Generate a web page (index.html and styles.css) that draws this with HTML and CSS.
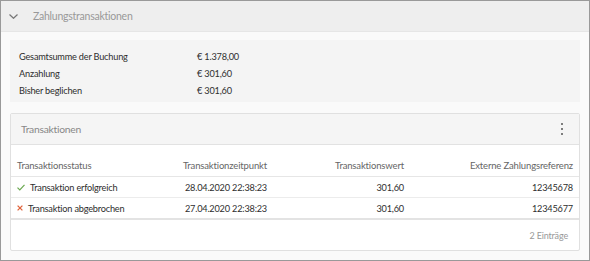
FILE: index.html
```html
<!DOCTYPE html>
<html lang="de">

<head>
    <meta charset="UTF-8">
    <title>Zahlungstransaktionen</title>
    <link rel="stylesheet" href="styles.css">
</head>

<body>
    <div class="panel">
        <div class="panel-header">
            <svg class="chevron" width="9" height="5" viewBox="0 0 9 5">
                <path d="M0.5 0.5 L4.5 4.3 L8.5 0.5" fill="none" stroke="#777" stroke-width="1.2"/>
            </svg>
            <span class="panel-title">Zahlungstransaktionen</span>
        </div>

        <div class="panel-body">
            <div class="summary">
                <div class="summary-row"><span class="label">Gesamtsumme der Buchung</span><span>€ 1.378,00</span></div>
                <div class="summary-row"><span class="label">Anzahlung</span><span>€ 301,60</span></div>
                <div class="summary-row"><span class="label">Bisher beglichen</span><span>€ 301,60</span></div>
            </div>

            <div class="card">
                <div class="card-header">
                    <span class="card-title">Transaktionen</span>
                    <span class="kebab"><i></i><i></i><i></i></span>
                </div>

                <div class="row head">
                    <div>Transaktionsstatus</div>
                    <div class="num">Transaktionzeitpunkt</div>
                    <div class="num">Transaktionswert</div>
                    <div class="num">Externe Zahlungsreferenz</div>
                </div>
                <div class="row">
                    <div class="status">
                        <svg class="icon" width="8" height="7" viewBox="0 0 8 7"><path d="M0.5 3.6 L2.8 5.9 L7.5 0.8" fill="none" stroke="#6aa84f" stroke-width="1.2"/></svg>
                        <span>Transaktion erfolgreich</span>
                    </div>
                    <div class="num">28.04.2020 22:38:23</div>
                    <div class="num">301,60</div>
                    <div class="num">12345678</div>
                </div>
                <div class="row last">
                    <div class="status">
                        <svg class="icon" width="6" height="6" viewBox="0 0 6 6"><path d="M0.6 0.6 L5.4 5.4 M5.4 0.6 L0.6 5.4" fill="none" stroke="#e0643c" stroke-width="1.3"/></svg>
                        <span>Transaktion abgebrochen</span>
                    </div>
                    <div class="num">27.04.2020 22:38:23</div>
                    <div class="num">301,60</div>
                    <div class="num">12345677</div>
                </div>

                <div class="card-footer">2 Einträge</div>
            </div>
        </div>
    </div>
</body>

</html>
```

FILE: styles.css
```css
* {
    box-sizing: border-box;
}

body {
    margin: 0;
    font-family: "Lato", "Liberation Sans", sans-serif;
    background: #fff;
    color: #2e2e2e;
}

.panel {
    width: 590px;
    height: 261px;
    border: 1px solid #999;
    background: #fafafa;
    overflow: hidden;
}

.panel-header {
    display: flex;
    align-items: center;
    height: 31px;
    background: #eeeeee;
    border-bottom: 1px solid #e6e6e6;
}

.chevron {
    margin-left: 8px;
    margin-top: 1px;
}

.panel-title {
    margin-left: 15px;
    font-size: 10.5px;
    letter-spacing: -0.25px;
    color: #999;
}

.panel-body {
    padding: 8px 9px 0 9px;
}

.summary {
    background: #f4f4f4;
    padding: 8px 9px 3px;
    font-size: 9.2px;
    letter-spacing: -0.2px;
}

.summary-row {
    display: flex;
    height: 17px;
    align-items: center;
}

.summary-row .label {
    width: 178px;
}

.card {
    margin-top: 11px;
    background: #fff;
    border: 1px solid #e0e0e0;
    border-radius: 2px;
}

.card-header {
    display: flex;
    justify-content: space-between;
    align-items: center;
    height: 31px;
    padding: 0 16px 0 10px;
    background: #f5f5f5;
    border-bottom: 1px solid #e2e2e2;
}

.card-title {
    font-size: 10.3px;
    letter-spacing: -0.25px;
    color: #888;
}

.kebab {
    display: flex;
    flex-direction: column;
    gap: 2.5px;
}

.kebab i {
    width: 2.5px;
    height: 2.5px;
    border-radius: 50%;
    background: #555;
}

.row {
    display: grid;
    grid-template-columns: 125px 137px 137px 1fr;
    height: 21px;
    align-items: center;
    border-bottom: 1px solid #ececec;
    font-size: 9.2px;
    letter-spacing: -0.2px;
}

.row > div {
    padding: 0 6px;
}

.row.head {
    height: 32px;
    padding-top: 10px;
    color: #666;
    font-size: 9.5px;
    letter-spacing: -0.15px;
    border-bottom: 1px solid #e6e6e6;
}

.row.last {
    height: 22px;
    border-bottom: 2px solid #e3e3e3;
}

.num {
    text-align: right;
}

.status {
    display: flex;
    align-items: center;
    gap: 5px;
    white-space: nowrap;
}

.icon {
    flex-shrink: 0;
}

.card-footer {
    height: 30px;
    display: flex;
    align-items: center;
    justify-content: flex-end;
    padding-right: 11px;
    font-size: 9px;
    letter-spacing: -0.15px;
    color: #999;
}
```
